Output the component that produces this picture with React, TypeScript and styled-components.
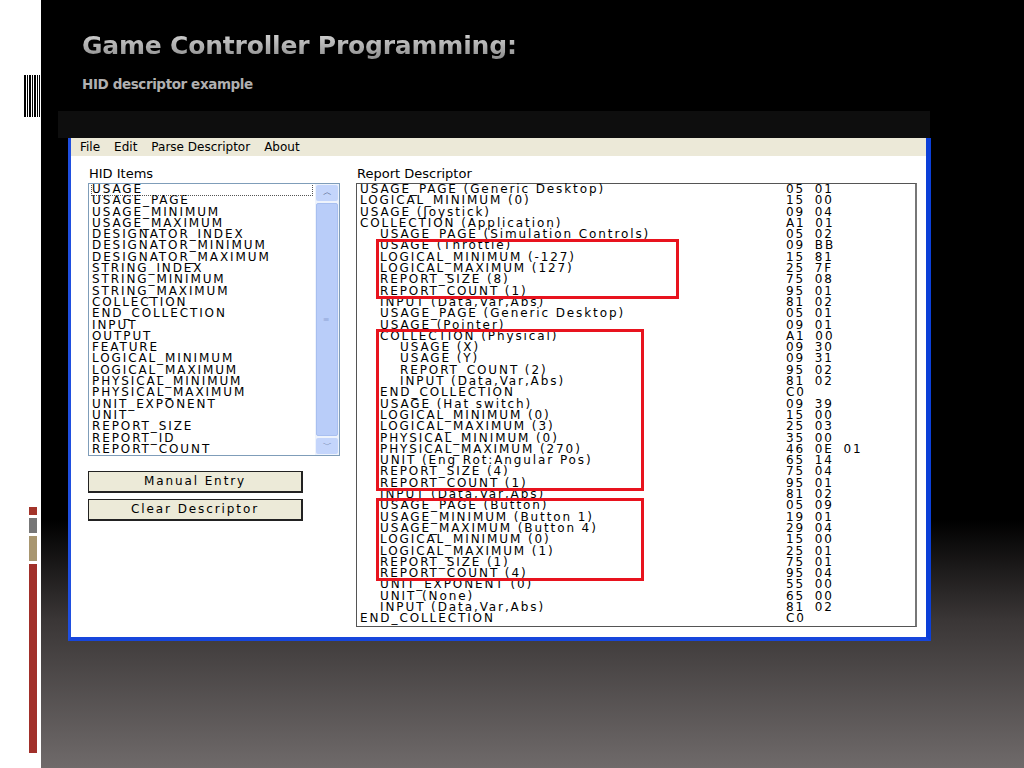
import styled, { createGlobalStyle } from "styled-components";

const Global = createGlobalStyle`
  html, body { margin: 0; padding: 0; }
  body { width: 1024px; height: 768px; overflow: hidden; background: #fff; }
`;

const Slide = styled.div`
  display: flex;
  width: 1024px;
  height: 768px;
`;

const Strip = styled.div`
  width: 41px;
  background: #fff;
  display: flex;
  flex-direction: column;
  align-items: flex-end;
  padding: 75px 0 0;
  box-sizing: border-box;
`;

const Barcode = styled.div`
  width: 16px;
  height: 42px;
  margin-right: 1px;
  background: repeating-linear-gradient(to right, #000 0 2px, #fff 2px 3px, #000 3px 4px, #fff 4px 5px);
`;

const Blocks = styled.div`
  display: flex;
  flex-direction: column;
  gap: 3px;
  margin: 390px 4px 0 0;
`;

const Block = styled.div<{ $c: string; $h: number }>`
  width: 8px;
  height: ${(p) => p.$h}px;
  background: ${(p) => p.$c};
`;

const Main = styled.div`
  flex: 1;
  background: linear-gradient(to bottom, #000 0, #000 520px, #3a3636 620px, #6f6a6a 768px);
  padding: 31px 0 0 17px;
  box-sizing: border-box;
`;

const Title = styled.h1`
  margin: 0 0 0 24px;
  font: bold 25px "DejaVu Sans", Verdana, sans-serif;
  letter-spacing: -0.2px;
  background: linear-gradient(to bottom, #d8d8d8, #8a8a8a);
  -webkit-background-clip: text;
  background-clip: text;
  color: transparent;
`;

const Subtitle = styled.h2`
  margin: 16px 0 0 24px;
  font: bold 13.5px "DejaVu Sans", Verdana, sans-serif;
  letter-spacing: -0.4px;
  color: #b0b0b0;
`;

const DarkBar = styled.div`
  margin-top: 19px;
  width: 872px;
  height: 27px;
  background: #0e0e0e;
`;

const Window = styled.div`
  margin-left: 10px;
  width: 863px;
  height: 503px;
  box-sizing: border-box;
  border-left: 3px solid #1f4fe0;
  border-right: 5px solid #0b3fd8;
  border-bottom: 4px solid #1746dc;
  background: #fff;
  display: flex;
  flex-direction: column;
`;

const Menu = styled.div`
  height: 18px;
  background: #ece9d8;
  display: flex;
  align-items: center;
  gap: 14px;
  padding-left: 9px;
  font: 12px Tahoma, "DejaVu Sans", sans-serif;
  color: #000;
`;

const Body = styled.div`
  flex: 1;
  display: flex;
  padding: 11px 0 0 17px;
  gap: 16px;
`;

const Column = styled.div`
  display: flex;
  flex-direction: column;
`;

const Label = styled.div`
  font: 13px "DejaVu Sans", sans-serif;
  height: 16px;
  line-height: 14px;
  padding-left: 1px;
`;

const mono = `font-family: "DejaVu Sans", Verdana, sans-serif; font-size: 12px; line-height: 11.3px; letter-spacing: 1.9px; color: #000;`;

const ListBox = styled.div`
  width: 252px;
  height: 273px;
  box-sizing: border-box;
  border: 1px solid #7f9db9;
  display: flex;
  ${mono}
`;

const ListItems = styled.div`
  flex: 1;
  padding: 0 0 0 3px;
  overflow: hidden;
  & > div:first-child { outline: 1px dotted #555; margin-right: 3px; }
`;

const Scroll = styled.div`
  width: 22px;
  display: flex;
  flex-direction: column;
  background: #eef3fc;
  padding: 1px;
  gap: 2px;
`;

const ScrollBtn = styled.div`
  height: 16px;
  border-radius: 2px;
  background: #c4d5fb;
  color: #4d6185;
  font-size: 9px;
  letter-spacing: 0;
  display: flex;
  align-items: center;
  justify-content: center;
`;

const Thumb = styled.div`
  flex: 1;
  border-radius: 2px;
  background: #b9cdf9;
  border: 1px solid #a8bff0;
  display: flex;
  align-items: center;
  justify-content: center;
  color: #8fa5d6;
  font-size: 8px;
`;

const Button = styled.button<{ $mt: number }>`
  width: 215px;
  height: 22px;
  margin-top: ${(p) => p.$mt}px;
  background: #ecead8;
  border: 1px solid #222;
  border-right-width: 2px;
  border-bottom-width: 2px;
  ${mono}
  cursor: pointer;
`;

const Report = styled.div`
  position: relative;
  width: 561px;
  height: 444px;
  box-sizing: border-box;
  border: 1px solid #555;
  border-right: 2px solid #777;
  padding: 0 0 0 3px;
  ${mono}
`;

const Line = styled.div<{ $indent: number }>`
  display: flex;
  height: 11.3px;
  white-space: pre;
  padding-left: ${(p) => p.$indent * 20}px;
`;

const Item = styled.span`
  flex: 1;
`;

const Hex = styled.span`
  width: 129px;
  word-spacing: 4px;
`;

const Mark = styled.div`
  position: absolute;
  border: 3px solid #e8131e;
  box-sizing: border-box;
`;

const items = [
  "USAGE", "USAGE_PAGE", "USAGE_MINIMUM", "USAGE_MAXIMUM", "DESIGNATOR_INDEX",
  "DESIGNATOR_MINIMUM", "DESIGNATOR_MAXIMUM", "STRING_INDEX", "STRING_MINIMUM",
  "STRING_MAXIMUM", "COLLECTION", "END_COLLECTION", "INPUT", "OUTPUT", "FEATURE",
  "LOGICAL_MINIMUM", "LOGICAL_MAXIMUM", "PHYSICAL_MINIMUM", "PHYSICAL_MAXIMUM",
  "UNIT_EXPONENT", "UNIT", "REPORT_SIZE", "REPORT_ID", "REPORT_COUNT",
];

const lines: [number, string, string][] = [
  [0, "USAGE_PAGE (Generic Desktop)", "05 01"],
  [0, "LOGICAL_MINIMUM (0)", "15 00"],
  [0, "USAGE (Joystick)", "09 04"],
  [0, "COLLECTION (Application)", "A1 01"],
  [1, "USAGE_PAGE (Simulation Controls)", "05 02"],
  [1, "USAGE (Throttle)", "09 BB"],
  [1, "LOGICAL_MINIMUM (-127)", "15 81"],
  [1, "LOGICAL_MAXIMUM (127)", "25 7F"],
  [1, "REPORT_SIZE (8)", "75 08"],
  [1, "REPORT_COUNT (1)", "95 01"],
  [1, "INPUT (Data,Var,Abs)", "81 02"],
  [1, "USAGE_PAGE (Generic Desktop)", "05 01"],
  [1, "USAGE (Pointer)", "09 01"],
  [1, "COLLECTION (Physical)", "A1 00"],
  [2, "USAGE (X)", "09 30"],
  [2, "USAGE (Y)", "09 31"],
  [2, "REPORT_COUNT (2)", "95 02"],
  [2, "INPUT (Data,Var,Abs)", "81 02"],
  [1, "END_COLLECTION", "C0"],
  [1, "USAGE (Hat switch)", "09 39"],
  [1, "LOGICAL_MINIMUM (0)", "15 00"],
  [1, "LOGICAL_MAXIMUM (3)", "25 03"],
  [1, "PHYSICAL_MINIMUM (0)", "35 00"],
  [1, "PHYSICAL_MAXIMUM (270)", "46 0E 01"],
  [1, "UNIT (Eng Rot:Angular Pos)", "65 14"],
  [1, "REPORT_SIZE (4)", "75 04"],
  [1, "REPORT_COUNT (1)", "95 01"],
  [1, "INPUT (Data,Var,Abs)", "81 02"],
  [1, "USAGE_PAGE (Button)", "05 09"],
  [1, "USAGE_MINIMUM (Button 1)", "19 01"],
  [1, "USAGE_MAXIMUM (Button 4)", "29 04"],
  [1, "LOGICAL_MINIMUM (0)", "15 00"],
  [1, "LOGICAL_MAXIMUM (1)", "25 01"],
  [1, "REPORT_SIZE (1)", "75 01"],
  [1, "REPORT_COUNT (4)", "95 04"],
  [1, "UNIT_EXPONENT (0)", "55 00"],
  [1, "UNIT (None)", "65 00"],
  [1, "INPUT (Data,Var,Abs)", "81 02"],
  [0, "END_COLLECTION", "C0"],
];

// highlighted groups: first line, last line, left edge, width
const marks = [
  { from: 5, to: 9, left: 19, width: 303 },
  { from: 13, to: 26, left: 19, width: 268 },
  { from: 28, to: 34, left: 19, width: 268 },
];

export default function App() {
  return (
    <Slide>
      <Global />
      <Strip>
        <Barcode />
        <Blocks>
          <Block $c="#a3342a" $h={8} />
          <Block $c="#777" $h={15} />
          <Block $c="#a89670" $h={25} />
          <Block $c="#a1302a" $h={189} />
        </Blocks>
      </Strip>
      <Main>
        <Title>Game Controller Programming:</Title>
        <Subtitle>HID descriptor example</Subtitle>
        <DarkBar />
        <Window>
          <Menu>
            <span>File</span>
            <span>Edit</span>
            <span>Parse Descriptor</span>
            <span>About</span>
          </Menu>
          <Body>
            <Column>
              <Label>HID Items</Label>
              <ListBox>
                <ListItems>
                  {items.map((i) => (
                    <div key={i}>{i}</div>
                  ))}
                </ListItems>
                <Scroll>
                  <ScrollBtn>︿</ScrollBtn>
                  <Thumb>≡</Thumb>
                  <ScrollBtn>﹀</ScrollBtn>
                </Scroll>
              </ListBox>
              <Button $mt={15}>Manual Entry</Button>
              <Button $mt={6}>Clear Descriptor</Button>
            </Column>
            <Column>
              <Label>Report Descriptor</Label>
              <Report>
                {lines.map(([ind, t, h], k) => (
                  <Line key={k} $indent={ind}>
                    <Item>{t}</Item>
                    <Hex>{h}</Hex>
                  </Line>
                ))}
                {marks.map((m) => (
                  <Mark
                    key={m.from}
                    style={{
                      top: m.from * 11.3 - 2,
                      height: (m.to - m.from + 1) * 11.3 + 4,
                      left: m.left,
                      width: m.width,
                    }}
                  />
                ))}
              </Report>
            </Column>
          </Body>
        </Window>
      </Main>
    </Slide>
  );
}
